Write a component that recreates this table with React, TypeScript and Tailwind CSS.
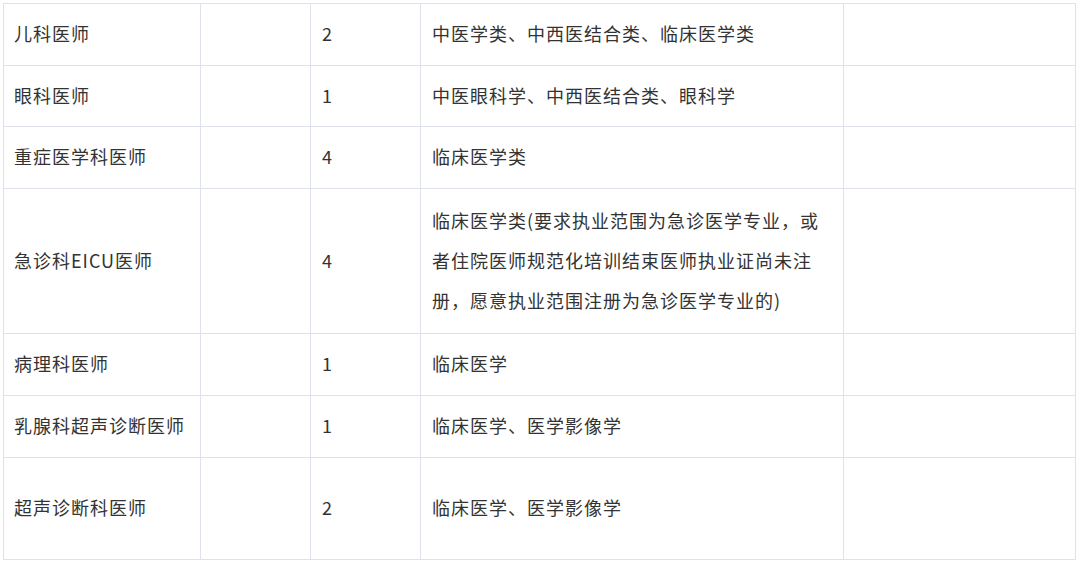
const rows: { name: string; count: string; major: string; h: string }[] = [
  { name: '儿科医师', count: '2', major: '中医学类、中西医结合类、临床医学类', h: 'h-[62px]' },
  { name: '眼科医师', count: '1', major: '中医眼科学、中西医结合类、眼科学', h: 'h-[61px]' },
  { name: '重症医学科医师', count: '4', major: '临床医学类', h: 'h-[62px]' },
  {
    name: '急诊科EICU医师',
    count: '4',
    major: '临床医学类(要求执业范围为急诊医学专业，或者住院医师规范化培训结束医师执业证尚未注册，愿意执业范围注册为急诊医学专业的)',
    h: 'h-[145px]',
  },
  { name: '病理科医师', count: '1', major: '临床医学', h: 'h-[62px]' },
  { name: '乳腺科超声诊断医师', count: '1', major: '临床医学、医学影像学', h: 'h-[62px]' },
  { name: '超声诊断科医师', count: '2', major: '临床医学、医学影像学', h: 'h-[102px]' },
];

export default function App() {
  return (
    <div className="w-[1080px] h-[562px] bg-white overflow-hidden pl-[3px] pt-[3px]">
      <table
        className="border-collapse table-fixed text-[18px] tracking-[1px] leading-[40px] text-[#333333]"
        style={{ fontFamily: '"Noto Sans CJK SC", "Noto Sans", sans-serif' }}
      >
        <colgroup>
          <col className="w-[197px]" />
          <col className="w-[110px]" />
          <col className="w-[110px]" />
          <col className="w-[423px]" />
          <col className="w-[232px]" />
        </colgroup>
        <tbody>
          {rows.map((r) => (
            <tr key={r.name} className={r.h}>
              <td className="border border-[#dfe2ea] px-[10px] pb-[3px] align-middle">{r.name}</td>
              <td className="border border-[#dfe2ea] px-[11px] pb-[3px] align-middle"></td>
              <td className="border border-[#dfe2ea] px-[11px] pb-[3px] align-middle">{r.count}</td>
              <td className="border border-[#dfe2ea] pl-[11px] pr-[6px] pb-[3px] align-middle">{r.major}</td>
              <td className="border border-[#dfe2ea] px-[10px] pb-[3px] align-middle"></td>
            </tr>
          ))}
        </tbody>
      </table>
    </div>
  );
}
